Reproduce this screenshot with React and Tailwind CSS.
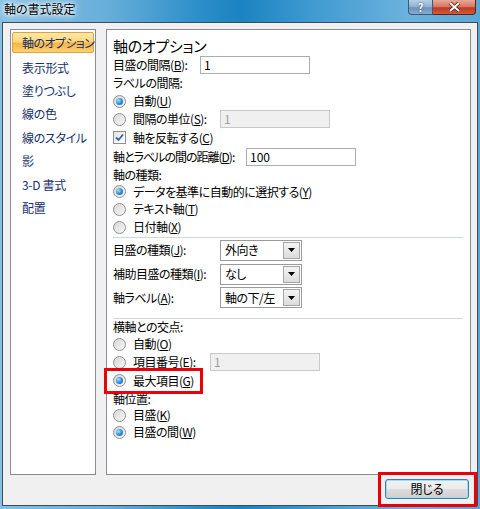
import React from "react";

const Acc = ({ c }) => <span className="underline underline-offset-[1px]">{c}</span>;

const Radio = ({ checked }) => (
  <span className="w-[13px] h-[13px] rounded-full border border-[#8e8f8f] bg-[linear-gradient(135deg,#d6d6d6,#f8f8f8)] flex items-center justify-center shrink-0">
    {checked && (
      <span className="w-[7px] h-[7px] rounded-full bg-[radial-gradient(circle_at_35%_35%,#a9e1ff,#2a86d6_55%,#1a5ea8)]" />
    )}
  </span>
);

const Check = () => (
  <span className="w-[13px] h-[13px] border border-[#8e8f8f] bg-[linear-gradient(135deg,#e4e4e4,#ffffff)] flex items-center justify-center shrink-0">
    <svg width="11" height="11" viewBox="0 0 11 11">
      <path d="M2 5.5 L4.5 8 L9 2.5" fill="none" stroke="#3a5fa6" strokeWidth="1.8" />
    </svg>
  </span>
);

const Input = ({ value, disabled, w = "w-[110px]" }) => (
  <div
    className={`${w} h-[18px] shrink-0 border flex items-center pl-[3px] text-[12px] tracking-normal ${
      disabled
        ? "border-[#c9c9c9] bg-[#f0f0f0] text-[#a0a0a0]"
        : "border-[#abadb3] bg-white text-black"
    }`}
  >
    {value}
  </div>
);

const Select = ({ value }) => (
  <div className="w-[82px] h-[21px] shrink-0 border border-[#9a9a9a] bg-white flex items-stretch p-px">
    <div className="flex-1 flex items-center pl-[3px] text-[12px] text-black whitespace-nowrap">{value}</div>
    <div className="w-[17px] border border-[#a5a5a5] bg-[linear-gradient(#f4f4f4,#dcdcdc)] flex items-center justify-center">
      <svg width="7" height="4" viewBox="0 0 7 4">
        <path d="M0 0 H7 L3.5 4 Z" fill="#000" />
      </svg>
    </div>
  </div>
);

const navItems = ["表示形式", "塗りつぶし", "線の色", "線のスタイル", "影", "3-D 書式", "配置"];

const Sidebar = () => (
  <div className="w-[86px] h-[446px] shrink-0 border border-[#898c95] bg-white pt-[2px] px-px text-[12px] text-[#17306a] whitespace-nowrap">
    <div className="h-[21px] rounded-[2px] border border-[#dba343] bg-[linear-gradient(#fee9a6,#fdd77a_45%,#f9b443_55%,#fcd270)] flex items-center pl-[9px] tracking-[-0.6px]">
      軸のオプション
    </div>
    <div className="mt-[3px]">
      {navItems.map((t) => (
        <div key={t} className="h-[23.4px] flex items-center pl-[10px] tracking-[-0.3px]">
          {t}
        </div>
      ))}
    </div>
  </div>
);

const Row = ({ h, children, className = "" }) => (
  <div className={`${h} flex items-center whitespace-nowrap ${className}`}>{children}</div>
);

const Label = ({ w, children }) => <span className={`${w} shrink-0`}>{children}</span>;

const RadioRow = ({ h, checked, children }) => (
  <Row h={h}>
    <Radio checked={checked} />
    <span className="ml-[7px]">{children}</span>
  </Row>
);

const Options = () => (
  <div className="flex-1 h-[446px] border border-[#898c95] bg-white pt-[6px] pl-[6px] pr-[5px] text-[12px] text-black leading-none tracking-[-0.5px]">
    <Row h="h-[19px]">
      <span className="text-[15px] tracking-[-0.3px]">軸のオプション</span>
    </Row>
    <Row h="h-[19px]">
      <Label w="w-[87px]">目盛の間隔(<Acc c="B" />):</Label>
      <Input value="1" />
    </Row>
    <Row h="h-[18px]">ラベルの間隔:</Row>
    <RadioRow h="h-[18px]" checked>
      自動(<Acc c="U" />)
    </RadioRow>
    <Row h="h-[18px]">
      <Radio />
      <span className="ml-[7px] w-[87px] shrink-0">間隔の単位(<Acc c="S" />):</span>
      <Input value="1" disabled />
    </Row>
    <Row h="h-[19px]">
      <Check />
      <span className="ml-[7px]">軸を反転する(<Acc c="C" />)</span>
    </Row>
    <Row h="h-[20px]">
      <span className="w-[133px] shrink-0 tracking-[-1px]">軸とラベルの間の距離(<Acc c="D" />):</span>
      <Input value="100" />
    </Row>
    <Row h="h-[16px]">軸の種類:</Row>
    <RadioRow h="h-[17px]" checked>
      データを基準に自動的に選択する(<Acc c="Y" />)
    </RadioRow>
    <RadioRow h="h-[18px]">
      テキスト軸(<Acc c="T" />)
    </RadioRow>
    <RadioRow h="h-[18px]">
      日付軸(<Acc c="X" />)
    </RadioRow>
    <div className="mt-px h-px bg-[#cfd6dd] mr-[2px]" />
    <Row h="h-[24px]">
      <Label w="w-[107px]">目盛の種類(<Acc c="J" />):</Label>
      <Select value="外向き" />
    </Row>
    <Row h="h-[24px]">
      <Label w="w-[107px]">補助目盛の種類(<Acc c="I" />):</Label>
      <Select value="なし" />
    </Row>
    <Row h="h-[23px]">
      <Label w="w-[107px]">軸ラベル(<Acc c="A" />):</Label>
      <Select value="軸の下/左" />
    </Row>
    <div className="mt-[9px] h-px bg-[#cfd6dd] mr-[2px]" />
    <Row h="h-[16px]">横軸との交点:</Row>
    <RadioRow h="h-[18px]">
      自動(<Acc c="O" />)
    </RadioRow>
    <Row h="h-[18px]">
      <Radio />
      <span className="ml-[7px] w-[77px] shrink-0">項目番号(<Acc c="E" />):</span>
      <Input value="1" disabled />
    </Row>
    <Row h="h-[19px]" className="relative">
      <Radio checked />
      <span className="ml-[7px]">最大項目(<Acc c="G" />)</span>
      <div className="absolute left-[-9px] top-[-3px] w-[99px] h-[26px] border-[3px] border-[#e8000b]" />
    </Row>
    <Row h="h-[18px]">軸位置:</Row>
    <RadioRow h="h-[14px]">
      目盛(<Acc c="K" />)
    </RadioRow>
    <RadioRow h="h-[20px]" checked>
      目盛の間(<Acc c="W" />)
    </RadioRow>
  </div>
);

export default function App() {
  return (
    <div className="w-[480px] h-[509px] flex flex-col overflow-hidden bg-[linear-gradient(90deg,#86c0e4_0%,#68afdb_22%,#2b8ec8_42%,#1a83c1_50%,#3f9ad0_65%,#6cb2dd_85%,#5aa7d7_100%)] font-['Noto_Sans_CJK_JP','Noto_Sans',sans-serif] [font-feature-settings:'palt']">
      <div className="h-[22px] flex items-start justify-between">
        <span className="pl-[4px] pt-[3px] text-[12px] leading-none text-black [text-shadow:0_0_6px_#fff,0_0_3px_#fff,0_0_10px_#fff]">
          軸の書式設定
        </span>
        <div className="flex mr-[4px]">
          <div className="w-[25px] h-[15px] rounded-bl-[4px] border border-t-0 border-[#3c5a78] bg-[linear-gradient(#b6d0e6,#8fb0cf_50%,#6a93b9_55%,#88abcc)] flex items-center justify-center text-white text-[11px] font-bold leading-none [text-shadow:0_0_2px_#1e3550]">
            ?
          </div>
          <div className="w-[43px] h-[15px] rounded-br-[4px] border border-t-0 border-l-0 border-[#5a2418] bg-[linear-gradient(#e9a699,#d8745f_50%,#c0381f_55%,#d05a3c)] flex items-center justify-center">
            <svg width="13" height="10" viewBox="0 0 13 10">
              <path d="M2 1 L11 9 M11 1 L2 9" stroke="#4a1a10" strokeWidth="3.6" />
              <path d="M2 1 L11 9 M11 1 L2 9" stroke="#fff" strokeWidth="2" />
            </svg>
          </div>
        </div>
      </div>
      <div className="ml-[2px] w-[476px] h-[484px] border border-[#3d4c5b] bg-[#f0f0f0] flex flex-col">
        <div className="flex gap-[10px] pt-[6px] pl-[7px] pr-[6px]">
          <Sidebar />
          <Options />
        </div>
        <div className="flex-1 flex justify-end items-start pt-[4px] pr-[8px]">
          <div className="relative">
            <div className="w-[84px] h-[20px] rounded-[3px] border border-[#3c7fb1] bg-[linear-gradient(#f2f2f2,#ebebeb_50%,#dddddd_51%,#cfcfcf)] shadow-[inset_0_0_0_1px_#9fdcf5] flex items-center justify-center text-[12px] text-black leading-none">
              閉じる
            </div>
            <div className="absolute left-[-7px] top-[-7px] w-[99px] h-[35px] border-[3px] border-[#e8000b]" />
          </div>
        </div>
      </div>
    </div>
  );
}
